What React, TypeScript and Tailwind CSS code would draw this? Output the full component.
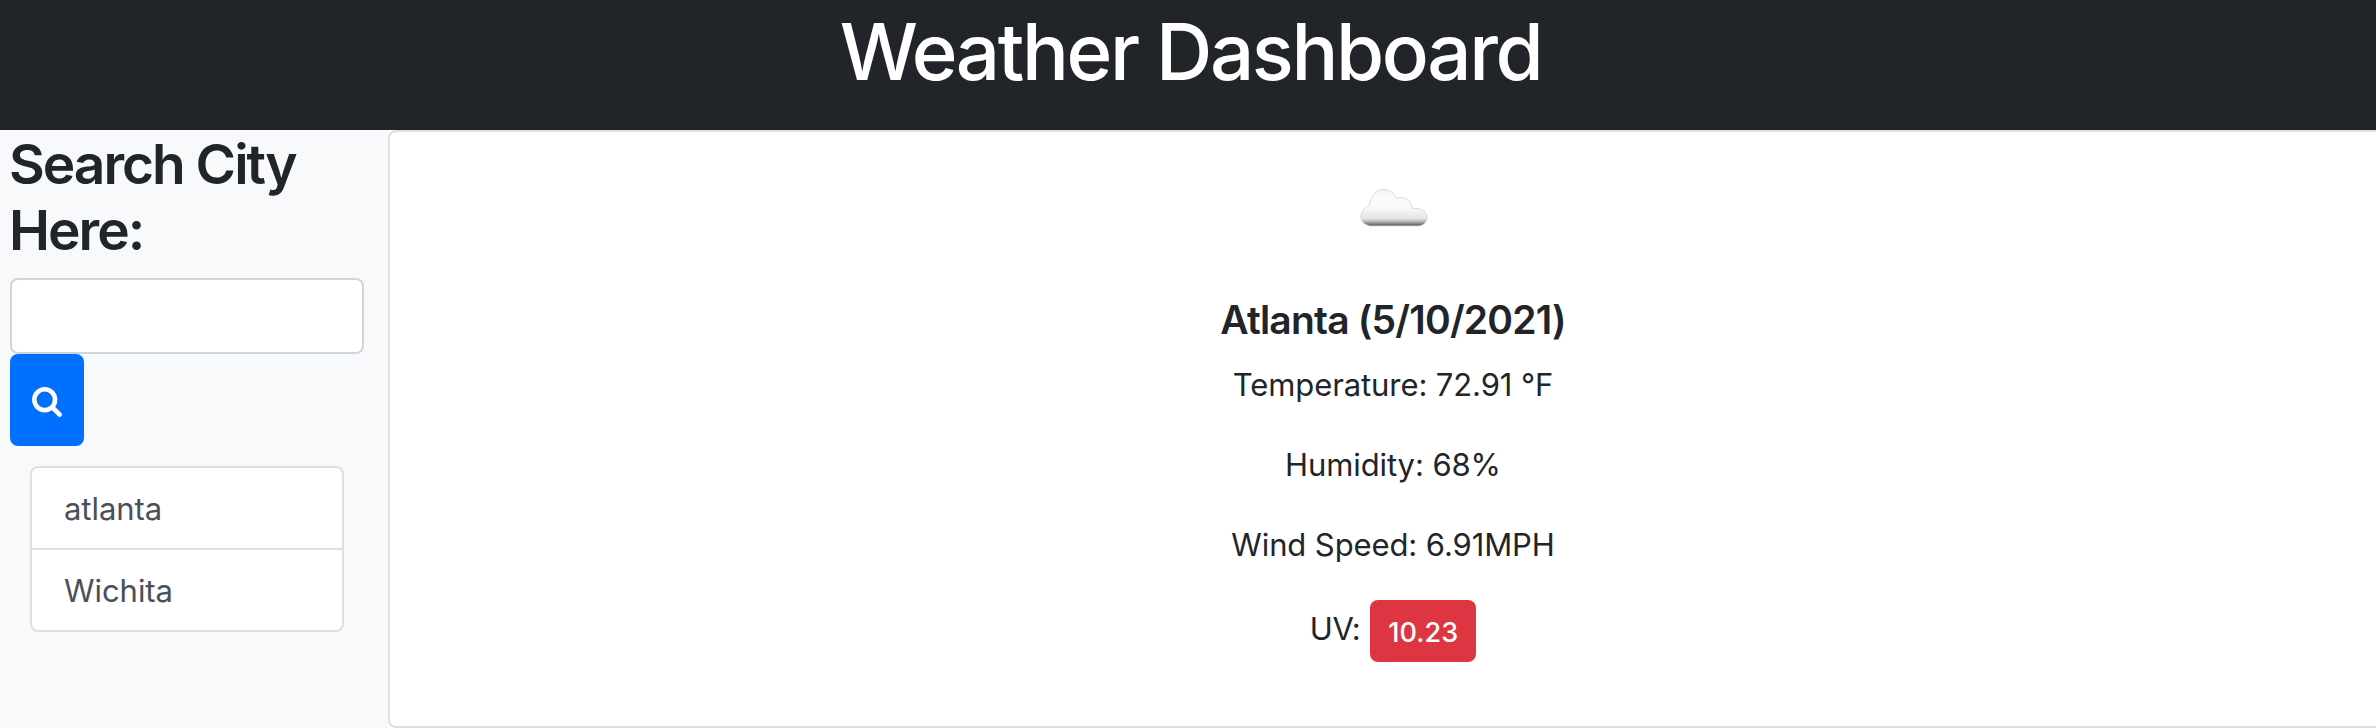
const cities = ['atlanta', 'Wichita'];

function SearchIcon() {
  return (
    <svg viewBox="64 128 1664 1664" className="size-[30px]" fill="currentColor" aria-hidden="true">
      <path d="M1216 832q0-185-131.5-316.5t-316.5-131.5-316.5 131.5-131.5 316.5 131.5 316.5 316.5 131.5 316.5-131.5 131.5-316.5zm512 832q0 52-38 90t-90 38q-54 0-90-38l-343-342q-179 124-399 124-143 0-273.5-55.5t-225-150-150-225-55.5-273.5 55.5-273.5 150-225 225-150 273.5-55.5 273.5 55.5 225 150 150 225 55.5 273.5q0 220-124 399l343 343q37 37 37 90z" />
    </svg>
  );
}

function CloudIcon() {
  return (
    <svg viewBox="0 0 100 100" className="size-[100px]" aria-hidden="true">
      <defs>
        <linearGradient id="cloud" gradientUnits="userSpaceOnUse" x1="0" y1="31" x2="0" y2="69">
          <stop offset="0" stopColor="#f0f0f0" />
          <stop offset="0.15" stopColor="#fafafa" />
          <stop offset="0.5" stopColor="#f9f9f9" />
          <stop offset="0.78" stopColor="#e4e4e4" />
          <stop offset="0.86" stopColor="#b4b4b4" />
          <stop offset="0.94" stopColor="#6c6c6c" />
          <stop offset="1" stopColor="#808080" />
        </linearGradient>
        <filter id="soft" x="-10%" y="-10%" width="120%" height="120%">
          <feGaussianBlur stdDeviation="0.7" />
        </filter>
      </defs>
      <path
        d="M27 68C21 66.500 18 63.500 18 58.500C18 53 21.500 49.500 26 47.500C26.500 45 27 44.500 27.500 43C29 36.500 34 31.500 40.500 31.500C46.500 31.500 51.500 35 53.500 40.500C61 37.500 68 42 69.500 50.500C77 49.500 84 53 84 59.500C84 64 81 67 76 68Z"
        fill="url(#cloud)"
        stroke="#cccccc"
        strokeWidth="1"
        strokeOpacity="0.7"
        filter="url(#soft)"
      />
    </svg>
  );
}

export default function App() {
  return (
    <div className="h-[728px] w-full overflow-hidden bg-white font-['Inter',sans-serif] text-[#212529]">
      <header className="h-[130px] bg-[#212529] pt-1 pl-[5px] text-center text-white">
        <h1 className="text-[78px] leading-[96px] font-medium tracking-[-2.4px]">Weather Dashboard</h1>
      </header>
      <div className="flex h-[598px]">
        <aside className="w-[388px] shrink-0 bg-[#f8f9fa] pt-[1px] pl-[10px]">
          <h2 className="-ml-px h-[147px] text-[55px] leading-[66px] font-[580] tracking-[-2px]">
            Search City
            <br />
            Here:
          </h2>
          <input
            type="text"
            aria-label="City"
            className="block h-[76px] w-[354px] rounded-lg border-2 border-[#ced4da] bg-white px-6 text-[31px] outline-none"
          />
          <button
            type="button"
            aria-label="Search"
            className="flex h-[92px] w-[74px] items-center justify-center rounded-lg bg-[#0070ff] pt-[4px] text-white"
          >
            <SearchIcon />
          </button>
          <ul className="mt-5 ml-5 w-[314px] divide-y-2 divide-[#dfdfdf] overflow-hidden rounded-lg border-2 border-[#dfdfdf] bg-white">
            {cities.map((city) => (
              <li key={city} className="px-8 pt-[17px] pb-[15px] text-[31px] leading-[48px] tracking-[-0.05px] text-[#495057]">
                {city}
              </li>
            ))}
          </ul>
        </aside>
        <main className="w-[2010px] shrink-0 rounded-lg border-2 border-[#dfdfdf] bg-white pt-[26px] text-center text-[31px] leading-[48px]">
          <div className="flex justify-center">
            <CloudIcon />
          </div>
          <h3 className="mt-[38px] mb-[17px] text-[39px] leading-[48px] font-semibold tracking-[-0.8px]">Atlanta (5/10/2021)</h3>
          <p className="mb-8 tracking-[-0.1px]">Temperature: 72.91 °F</p>
          <p className="mb-8 tracking-[-0.1px]">Humidity: 68%</p>
          <p className="mb-[31px] tracking-[-0.1px]">Wind Speed: 6.91MPH</p>
          <p className="flex justify-center gap-[10px]">
            <span className="pt-[5px] tracking-[-0.3px]">UV:</span>
            <span className="h-[62px] w-[106px] rounded-lg bg-[#de3543] text-[27px] leading-[65px] font-medium tracking-[0.1px] text-white">
              10.23
            </span>
          </p>
        </main>
      </div>
    </div>
  );
}
